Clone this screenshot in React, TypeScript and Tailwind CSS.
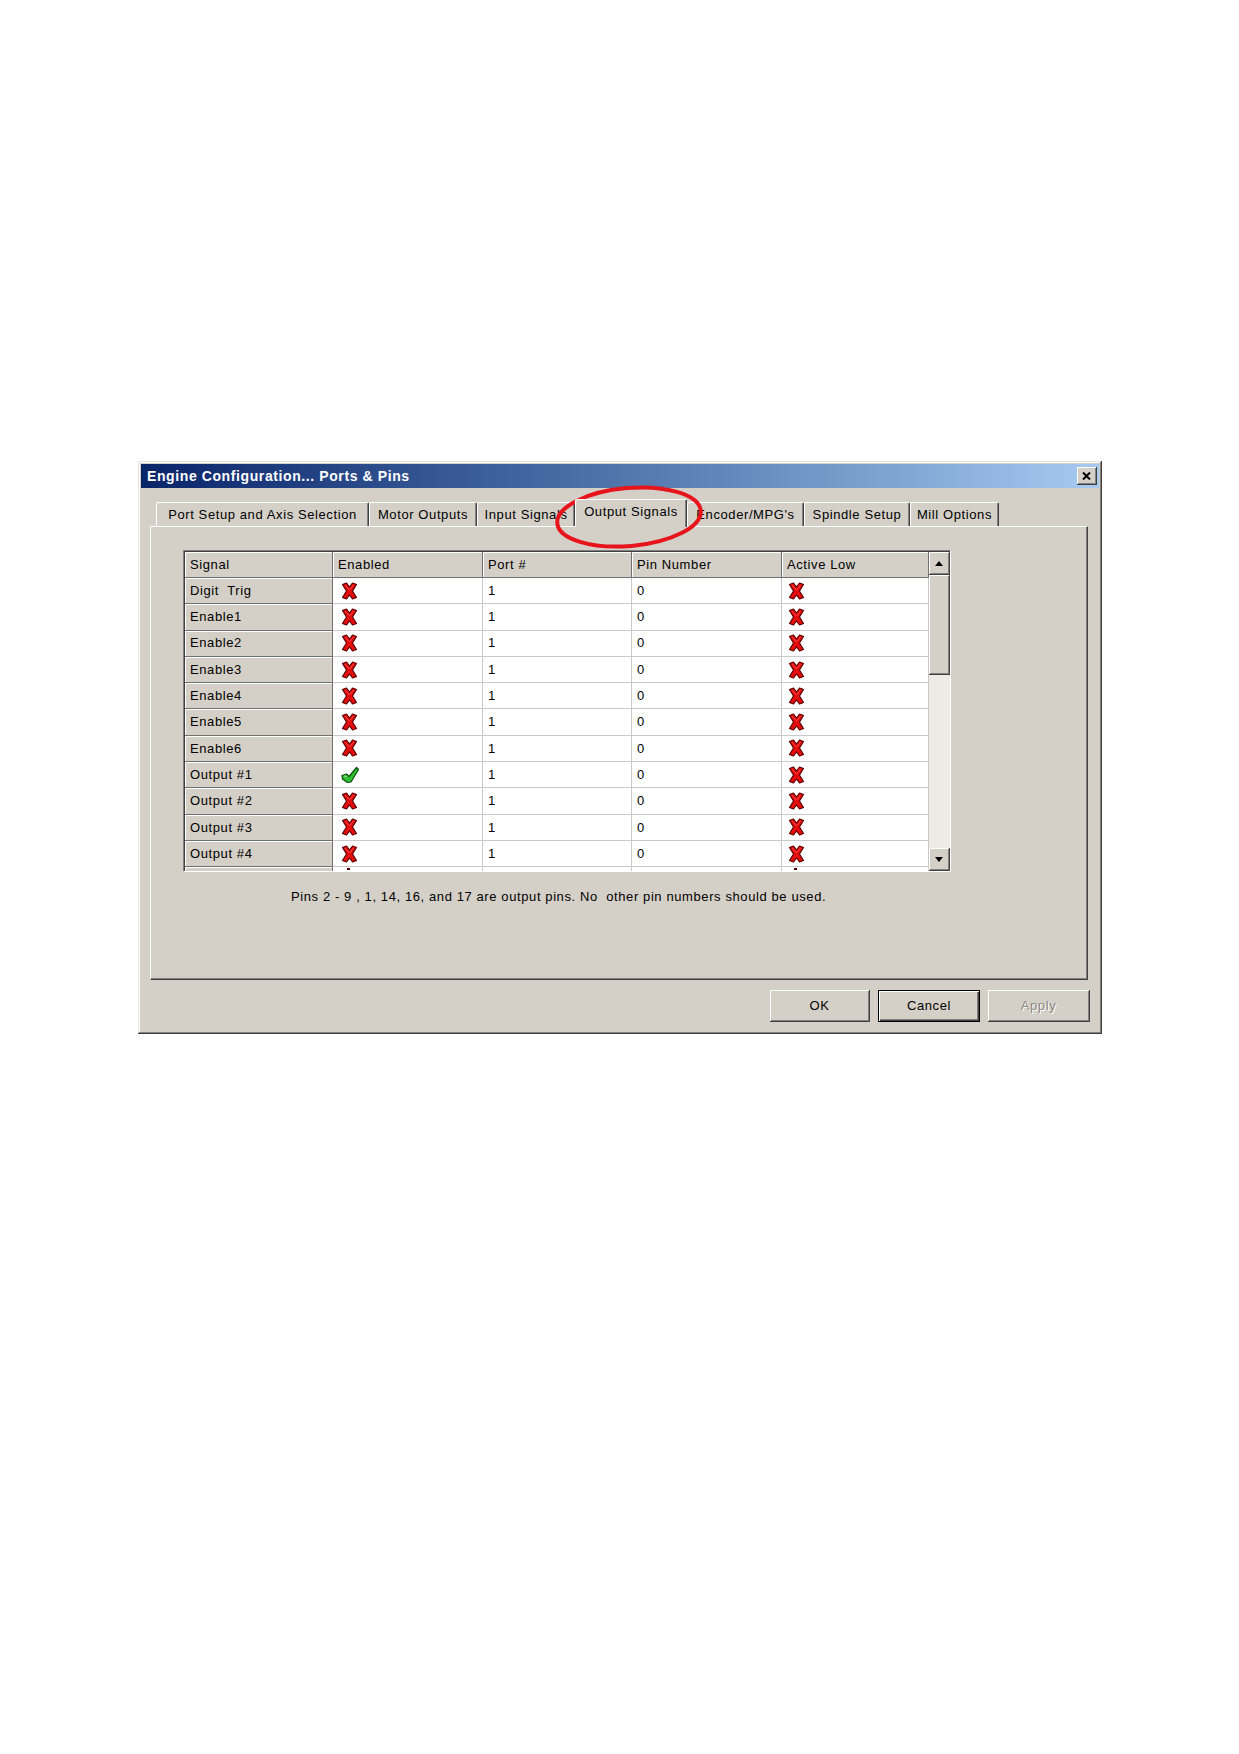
import React from "react";

type Row = { name: string; enabled: boolean; port: string; pin: string; activeLow: boolean };

const rows: Row[] = [
  { name: "Digit  Trig", enabled: false, port: "1", pin: "0", activeLow: false },
  { name: "Enable1", enabled: false, port: "1", pin: "0", activeLow: false },
  { name: "Enable2", enabled: false, port: "1", pin: "0", activeLow: false },
  { name: "Enable3", enabled: false, port: "1", pin: "0", activeLow: false },
  { name: "Enable4", enabled: false, port: "1", pin: "0", activeLow: false },
  { name: "Enable5", enabled: false, port: "1", pin: "0", activeLow: false },
  { name: "Enable6", enabled: false, port: "1", pin: "0", activeLow: false },
  { name: "Output #1", enabled: true, port: "1", pin: "0", activeLow: false },
  { name: "Output #2", enabled: false, port: "1", pin: "0", activeLow: false },
  { name: "Output #3", enabled: false, port: "1", pin: "0", activeLow: false },
  { name: "Output #4", enabled: false, port: "1", pin: "0", activeLow: false },
];

const tabs = [
  { label: "Port Setup and Axis Selection", cls: "w-[213px]" },
  { label: "Motor Outputs", cls: "w-[108px]" },
  { label: "Input Signals", cls: "w-[98px]" },
  { label: "Output Signals", cls: "w-[112px]", active: true },
  { label: "Encoder/MPG's", cls: "w-[117px]" },
  { label: "Spindle Setup", cls: "w-[106px]" },
  { label: "Mill Options", cls: "w-[89px]" },
];

function CrossIcon() {
  return (
    <svg width="17" height="18" viewBox="0 0 17 18" className="block">
      <path
        d="M1.5 2.5 L5.5 1 L8.5 5 L11.5 1 L15.5 2.5 L11.5 9 L15.5 15.5 L11.5 17 L8.5 13 L5.5 17 L1.5 15.5 L5.5 9 Z"
        fill="#e40c0c"
        stroke="#5a0000"
        strokeWidth="1.2"
        strokeLinejoin="round"
      />
      <path d="M4 3 L8.5 8 M12.5 3 L9 7.5" stroke="#ff5a5a" strokeWidth="0.8" fill="none" />
    </svg>
  );
}

function CheckIcon() {
  return (
    <svg width="19" height="18" viewBox="0 0 19 18" className="block">
      <path
        d="M1 9.5 L5.5 8 L8 10.5 L15.5 1.5 L17.5 3.5 L10 16 L6.5 16.5 L1.5 13 Z"
        fill="#2fc02f"
        stroke="#0c4a0c"
        strokeWidth="1.2"
        strokeLinejoin="round"
      />
      <path d="M3 10 L6 10.5" stroke="#9cf09c" strokeWidth="1" fill="none" />
    </svg>
  );
}

function HeadCell({ children, cls }: { children?: React.ReactNode; cls: string }) {
  return (
    <div
      className={`${cls} h-full flex items-center pl-[5px] bg-[#d4d0c8] border-r border-b border-[#707070] shadow-[inset_1px_1px_0_#ffffff] whitespace-pre`}
    >
      {children}
    </div>
  );
}

function DataCell({ children, cls }: { children?: React.ReactNode; cls: string }) {
  return (
    <div className={`${cls} h-full flex items-center pl-[5px] bg-white border-r border-b border-[#c9c9c9]`}>
      {children}
    </div>
  );
}

function ArrowButton({ up }: { up: boolean }) {
  return (
    <div className="h-[23px] w-full flex items-center justify-center bg-[#d4d0c8] border-r border-b border-[#404040] shadow-[inset_1px_1px_0_#ffffff,inset_-1px_-1px_0_#808080]">
      <svg width="8" height="5" viewBox="0 0 8 5">
        {up ? <path d="M0 5 L4 0 L8 5 Z" fill="#000" /> : <path d="M0 0 L4 5 L8 0 Z" fill="#000" />}
      </svg>
    </div>
  );
}

export default function App() {
  return (
    <div className="w-[1239px] h-[1754px] bg-white pt-[461px] pl-[138px] font-['Liberation_Sans',Arial,sans-serif] text-[13px] tracking-[0.6px] text-black">
      <div className="relative w-[964px] h-[573px] p-[3px] bg-[#d4d0c8] shadow-[inset_-1px_-1px_0_#404040,inset_1px_1px_0_#e6e4df,inset_-2px_-2px_0_#808080,inset_2px_2px_0_#ffffff]">
        {/* caption bar */}
        <div className="h-[24px] flex items-center justify-between bg-gradient-to-r from-[#0a246a] to-[#a6caf0]">
          <span className="pl-[6px] text-white font-bold text-[14px] tracking-[0.6px]">
            Engine Configuration... Ports &amp; Pins
          </span>
          <div className="mr-[2px] w-[20px] h-[18px] flex items-center justify-center bg-[#d4d0c8] border-r border-b border-[#404040] shadow-[inset_1px_1px_0_#ffffff,inset_-1px_-1px_0_#808080]">
            <svg width="9" height="8" viewBox="0 0 9 8">
              <path d="M1 0.5 L8 7.5 M8 0.5 L1 7.5" stroke="#000" strokeWidth="2" />
            </svg>
          </div>
        </div>

        {/* tab strip */}
        <div className="mt-[11px] h-[27px] pl-[12px] flex items-end">
          <div className="flex items-end pl-[3px]">
            {tabs.map((t) =>
              t.active ? (
                <div
                  key={t.label}
                  className={`${t.cls} relative z-10 -mb-px h-[28px] pb-[4px] flex items-center justify-center bg-[#d4d0c8] border-t border-l border-white border-r border-r-[#404040] rounded-t-[2px] shadow-[inset_-1px_0_0_#808080] whitespace-nowrap`}
                >
                  {t.label}
                </div>
              ) : (
                <div
                  key={t.label}
                  className={`${t.cls} h-[24px] flex items-center justify-center bg-[#d4d0c8] border-t border-l border-white border-r border-r-[#404040] rounded-t-[2px] shadow-[inset_-1px_0_0_#808080] whitespace-nowrap`}
                >
                  {t.label}
                </div>
              )
            )}
          </div>
        </div>

        {/* tab page */}
        <div className="ml-[9px] w-[938px] h-[454px] border-t border-l border-white border-r border-b border-r-[#404040] border-b-[#404040] shadow-[inset_-1px_-1px_0_#808080]">
          <div className="pl-[32px] pt-[23px]">
            <div className="w-[768px] h-[322px] flex border-t border-l border-[#808080] border-r border-b border-r-white border-b-white shadow-[inset_1px_1px_0_#404040]">
              <div className="w-[745px] h-full flex flex-col pl-px pt-px">
                <div className="h-[26px] flex shrink-0">
                  <HeadCell cls="w-[148px]">Signal</HeadCell>
                  <HeadCell cls="w-[150px]">Enabled</HeadCell>
                  <HeadCell cls="w-[149px]">Port #</HeadCell>
                  <HeadCell cls="w-[150px]">Pin Number</HeadCell>
                  <HeadCell cls="w-[147px]">Active Low</HeadCell>
                </div>
                <div className="flex-1 overflow-hidden">
                  {rows.map((r) => (
                    <div key={r.name} className="h-[26.3px] flex">
                      <HeadCell cls="w-[148px]">{r.name}</HeadCell>
                      <DataCell cls="w-[150px] pl-[8px]">{r.enabled ? <CheckIcon /> : <CrossIcon />}</DataCell>
                      <DataCell cls="w-[149px]">{r.port}</DataCell>
                      <DataCell cls="w-[150px]">{r.pin}</DataCell>
                      <DataCell cls="w-[147px] pl-[6px]">{r.activeLow ? <CheckIcon /> : <CrossIcon />}</DataCell>
                    </div>
                  ))}
                  {/* next row, scrolled mostly out of view */}
                  <div className="h-[26.3px] flex items-start">
                    <HeadCell cls="w-[148px]" />
                    <DataCell cls="w-[150px] pl-[8px] !items-start pt-[1px]">
                      <span className="block w-[3px] h-[2px] ml-[6px] bg-[#5a0000]" />
                    </DataCell>
                    <DataCell cls="w-[149px]" />
                    <DataCell cls="w-[150px]" />
                    <DataCell cls="w-[147px] pl-[6px] !items-start pt-[1px]">
                      <span className="block w-[3px] h-[2px] ml-[6px] bg-[#5a0000]" />
                    </DataCell>
                  </div>
                </div>
              </div>
              {/* vertical scroll bar */}
              <div className="w-[21px] h-full pt-px flex flex-col">
                <ArrowButton up />
                <div className="h-[100px] bg-[#d4d0c8] border-r border-b border-[#404040] shadow-[inset_1px_1px_0_#ffffff,inset_-1px_-1px_0_#808080]" />
                <div className="flex-1 bg-[#ecebe6]" />
                <ArrowButton up={false} />
              </div>
            </div>
            <div className="mt-[18px] ml-[108px] text-[13px] leading-[14px] tracking-[0.6px] whitespace-pre">
              Pins 2 - 9 , 1, 14, 16, and 17 are output pins. No  other pin numbers should be used.
            </div>
          </div>
        </div>

        {/* dialog buttons */}
        <div className="mt-[10px] pr-[9px] flex justify-end gap-[8px]">
          <button className="w-[100px] h-[32px] bg-[#d4d0c8] border-r border-b border-[#404040] shadow-[inset_1px_1px_0_#ffffff,inset_-1px_-1px_0_#808080]">
            OK
          </button>
          <button className="w-[102px] h-[32px] bg-[#d4d0c8] border border-black shadow-[inset_1px_1px_0_#ffffff,inset_-1px_-1px_0_#404040,inset_-2px_-2px_0_#808080]">
            Cancel
          </button>
          <button className="w-[102px] h-[32px] bg-[#d4d0c8] text-[#8a8880] [text-shadow:1px_1px_0_#ffffff] border-r border-b border-[#404040] shadow-[inset_1px_1px_0_#ffffff,inset_-1px_-1px_0_#808080]">
            Apply
          </button>
        </div>

        {/* red marker ring drawn over the active tab */}
        <svg
          className="absolute left-[412px] top-[21px] pointer-events-none"
          width="158"
          height="71"
          viewBox="0 0 158 71"
        >
          <ellipse
            cx="79"
            cy="35"
            rx="72"
            ry="29"
            transform="rotate(-5 79 35)"
            fill="none"
            stroke="#e8141c"
            strokeWidth="4"
          />
        </svg>
      </div>
    </div>
  );
}
